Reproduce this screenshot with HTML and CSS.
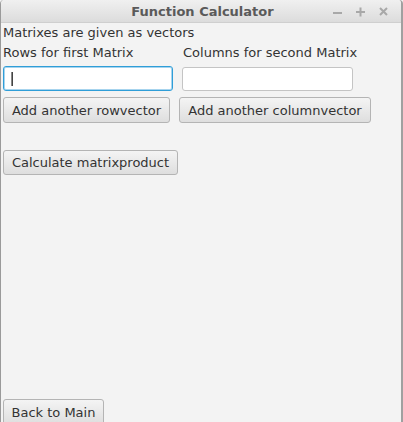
FILE: index.html
```html
<!DOCTYPE html>
<html>
<head>
<meta charset="utf-8">
<link rel="stylesheet" href="styles.css">
</head>
<body>
<div class="window">
  <div class="titlebar">
    <span class="title">Function Calculator</span>
    <div class="controls">
      <svg width="10" height="10" viewBox="0 0 10 10"><rect x="0" y="5" width="9" height="2" fill="#a8a8a8"/></svg>
      <svg width="10" height="10" viewBox="0 0 10 10"><rect x="0" y="4" width="9" height="2" fill="#a8a8a8"/><rect x="3.5" y="0.5" width="2" height="9" fill="#a8a8a8"/></svg>
      <svg width="10" height="10" viewBox="0 0 10 10"><path d="M1 1 L8 8 M8 1 L1 8" stroke="#a8a8a8" stroke-width="2"/></svg>
    </div>
  </div>
  <div class="content">
    <div class="label top">Matrixes are given as vectors</div>
    <div class="grid">
      <div class="col col1">
        <div class="label">Rows for first Matrix</div>
        <div class="field focused"><span class="caret"></span></div>
        <button class="btn">Add another rowvector</button>
      </div>
      <div class="col col2">
        <div class="label">Columns for second Matrix</div>
        <div class="field"></div>
        <button class="btn">Add another columnvector</button>
      </div>
    </div>
    <button class="btn calc">Calculate matrixproduct</button>
    <div class="spacer"></div>
    <button class="btn back">Back to Main</button>
  </div>
</div>
</body>
</html>
```
FILE: styles.css
```css
html, body {
  margin: 0;
  padding: 0;
  width: 403px;
  height: 422px;
  overflow: hidden;
  background: #f3f3f3;
}
.window {
  width: 403px;
  height: 422px;
  box-sizing: border-box;
  border-left: 1px solid #9a9a9a;
  border-right: 2px solid #a0a0a0;
  border-top-right-radius: 4px;
  border-top-left-radius: 4px;
  background: #f3f3f3;
  display: flex;
  flex-direction: column;
  font-family: "DejaVu Sans", sans-serif;
  font-size: 13px;
  color: #333;
}
.titlebar {
  height: 23px;
  flex: none;
  box-sizing: border-box;
  border-bottom: 1px solid #cfcfcf;
  background: linear-gradient(#f0f0f0, #dcdcdc);
  border-top-left-radius: 4px;
  border-top-right-radius: 4px;
  position: relative;
  display: flex;
  align-items: center;
  justify-content: center;
}
.title {
  font-weight: bold;
  font-size: 13px;
  color: #5a5a5a;
  margin-left: 3px;
}
.controls {
  position: absolute;
  right: 12px;
  top: 7px;
  display: flex;
  gap: 13px;
}
.controls svg { display: block; }
.content {
  flex: 1;
  display: flex;
  flex-direction: column;
  align-items: flex-start;
  padding-left: 2px;
}
.label {
  line-height: 16px;
  color: #333;
}
.top { margin-top: 2px; }
.grid {
  display: flex;
  gap: 8px;
  margin-top: 4px;
}
.col {
  display: flex;
  flex-direction: column;
  align-items: flex-start;
}
.col2 .label { margin-left: 2px; }
.field {
  margin-top: 5px;
  height: 25px;
  width: 169px;
  box-sizing: border-box;
  background: #fff;
  border: 1px solid #c4c4c4;
  border-radius: 3px;
  position: relative;
}
.col1 .field { width: 170px; }
.col2 .field { margin-top: 6px; height: 24px; width: 171px; margin-left: 1px; }
.field.focused {
  border: 1px solid #2f9ed8;
  box-shadow: inset 0 0 0 1px #a7d4ee;
}
.caret {
  position: absolute;
  left: 7px;
  top: 5px;
  width: 1px;
  height: 14px;
  background: #444;
  border-left: 1px solid #888;
}
.btn {
  font-family: "DejaVu Sans", sans-serif;
  font-size: 13px;
  color: #333;
  height: 26px;
  box-sizing: border-box;
  padding: 0 7px;
  border: 1px solid #b4b4b4;
  border-radius: 3px;
  background: linear-gradient(#f4f4f4, #dedede);
  margin: 0;
  white-space: nowrap;
}
.col .btn { margin-top: 6px; }
.col1 .btn { width: 167px; }
.col2 .btn { width: 192px; margin-left: -2px; }
.calc {
  margin-top: 27px;
  width: 175px;
  height: 25px;
}
.spacer { flex: 1; }
.back {
  width: 101px;
  margin-bottom: -3px;
}
```
